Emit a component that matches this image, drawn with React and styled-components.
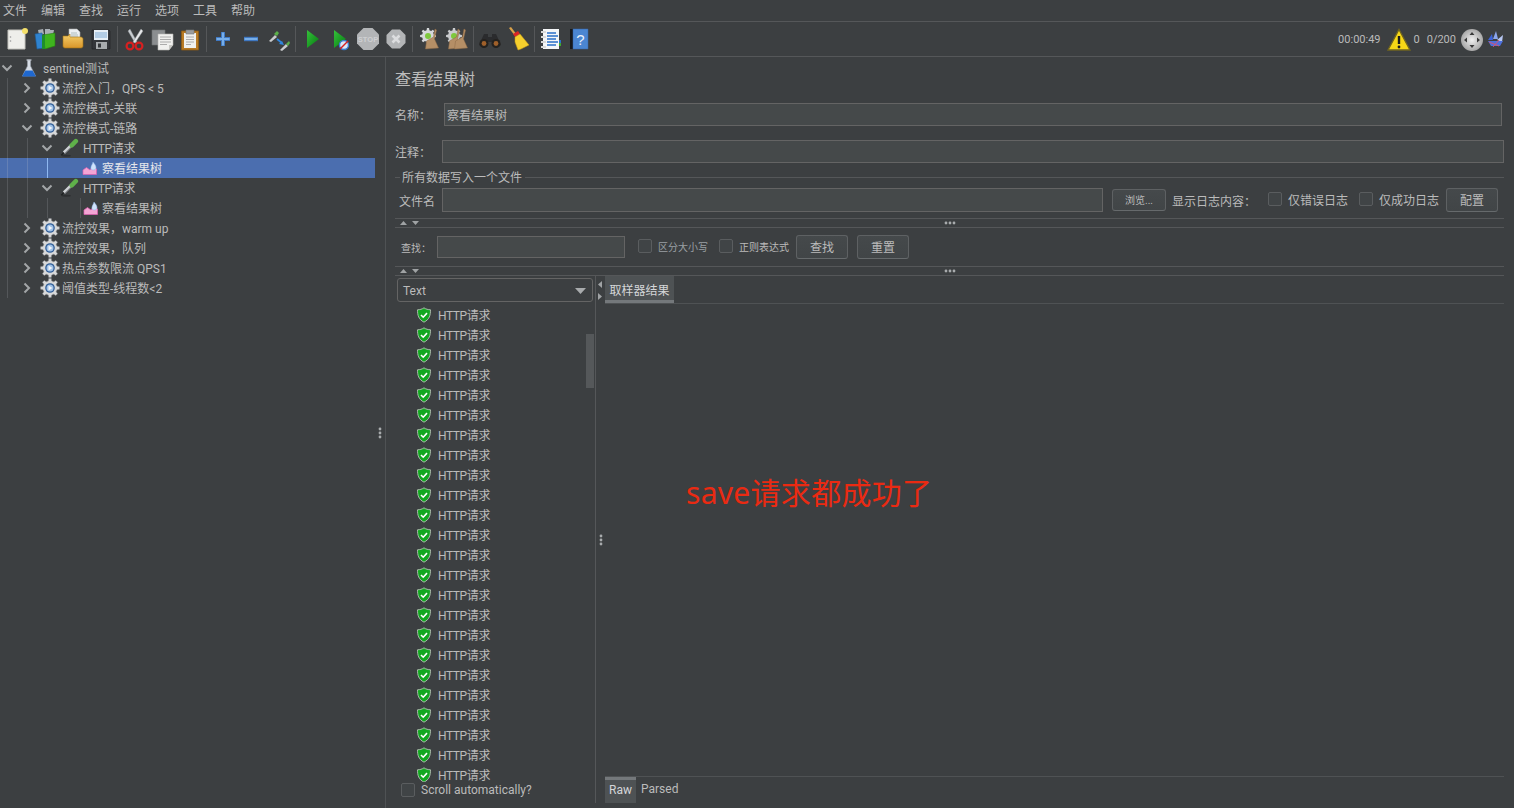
import React from "react";
import styled, { createGlobalStyle } from "styled-components";

const Global = createGlobalStyle`
  html, body { margin: 0; padding: 0; background: #3c3f41; }
  body { font: 12px Roboto, "Noto Sans CJK SC", sans-serif; color: #bbbbbb; overflow: hidden; }
  * { box-sizing: border-box; }
`;

const Page = styled.div`width: 1514px; height: 808px; display: flex; flex-direction: column; background: #3c3f41; overflow: hidden;`;
const MenuBar = styled.div`height: 22px; flex: none; display: flex; gap: 14px; padding: 1px 0 0 3px; align-items: center; border-bottom: 1px solid #555759; line-height: 20px;`;
const MenuItem = styled.span`width: 24px; white-space: nowrap;`;
const ToolBar = styled.div`height: 35px; flex: none; display: flex; align-items: center; padding: 0 9px 1px 3px; border-bottom: 1px solid #555759;`;
const ToolButton = styled.div`width: 28px; height: 28px; flex: none; display: flex; align-items: center; justify-content: center;`;
const ToolSep = styled.div`width: 5px; height: 26px; flex: none; display: flex; justify-content: center; &::before { content: ""; width: 1px; background: #555759; }`;
const Status = styled.div`margin-left: auto; display: flex; align-items: center; font-size: 11px; line-height: 16px; padding-top: 2px;`;
const StatusItem = styled.span`margin-left: ${p => p.$gap || 0}px; display: flex; align-items: center;`;
const Main = styled.div`flex: 1; display: flex; min-height: 0;`;

const Tree = styled.div`width: 375px; flex: none; padding-top: 1px;`;
const Row = styled.div`height: 20px; display: flex; align-items: center; padding-left: 7px; white-space: nowrap; background: ${p => p.$selected ? "#4b6eaf" : "transparent"}; color: ${p => p.$selected ? "#e4e6eb" : "#bbbbbb"};`;
const Guide = styled.span`width: 20px; height: 100%; flex: none; border-left: 1px solid ${p => p.$bright ? "#8fb8f0" : p.$selected ? "#6480b5" : "#54575a"};`;
const Chevron = styled.span`width: 14px; height: 14px; flex: none; margin-left: -7px; display: flex; align-items: center; justify-content: center;`;
const IconSlot = styled.span`width: 20px; height: 100%; flex: none; margin-left: ${p => p.$left}px; margin-right: ${p => p.$right}px; display: flex; align-items: center; justify-content: center; border-left: ${p => p.$tick ? "1px solid #54575a" : "none"};`;
const RowLabel = styled.span`margin-top: -2px; letter-spacing: ${p => p.$tight ? "-0.4px" : "0"};`;
const Splitter = styled.div`width: 10px; flex: none; display: flex; align-items: center; justify-content: center;`;

const Right = styled.div`flex: 1; min-width: 0; border-left: 1px solid #4f5254; padding: 0 10px 5px 9px; display: flex; flex-direction: column;`;
const Title = styled.div`height: 44px; flex: none; font-size: 16px; line-height: 46px;`;
const FieldRow = styled.div`height: ${p => p.$h || 23}px; flex: none; margin-top: ${p => p.$top}px; display: flex; align-items: center;`;
const Label = styled.span`flex: none; width: ${p => p.$w}px; margin-left: ${p => p.$left || 0}px; padding-top: ${p => p.$down || 0}px; white-space: nowrap; font-size: ${p => p.$size || 12}px;`;
const Field = styled.input`
  height: ${p => p.$h || 23}px; width: ${p => p.$w ? p.$w + "px" : "auto"}; flex: ${p => p.$w ? "none" : 1}; min-width: 0;
  margin-right: ${p => p.$right || 0}px; background: #45494a; border: 1px solid #646464; color: #bbbbbb; padding: 0 2px; font: inherit; outline: none;
`;
const Legend = styled.div`height: 18px; flex: none; margin-top: 5px; display: flex; align-items: center; gap: 2px; &::before { content: ""; width: 5px; height: 1px; background: #555759; } &::after { content: ""; flex: 1; height: 1px; background: #555759; }`;
const LegendText = styled.span`padding-right: 1px; margin-top: -2px;`;
const Btn = styled.button`
  width: ${p => p.$w}px; height: ${p => p.$h || 24}px; flex: none; padding: 1px 0 0; margin: 0 0 0 ${p => p.$left || 0}px;
  background: linear-gradient(#45494b, #414547); border: 1px solid #5e6163; border-bottom-color: #666a6c; border-radius: 3px;
  color: #bbbbbb; font: inherit; font-size: ${p => p.$size || 12}px; line-height: 1;
`;
const Check = styled.span`width: 14px; height: 14px; flex: none; margin-left: ${p => p.$left || 0}px; margin-right: 6px; margin-top: -2px; border: 1px solid #5a5d5f; border-radius: 2px; background: #404446;`;
const CheckLabel = styled.span`flex: none; white-space: nowrap; margin-top: -2px; font-size: ${p => p.$size || 12}px; color: ${p => p.$dim ? "#9aa0a4" : "#bbbbbb"};`;

const Divider = styled.div`height: 10px; flex: none; border-top: 1px solid #555759; border-bottom: 1px solid #555759; margin-top: ${p => p.$top || 0}px; display: grid; grid-template-columns: 1fr auto 1fr; align-items: center;`;
const Arrows = styled.div`display: flex; gap: 5px; padding-left: 5px; align-items: center;`;

const Bottom = styled.div`flex: 1; min-height: 0; display: flex;`;
const Results = styled.div`width: 201px; flex: none; display: flex; flex-direction: column; border-right: 1px solid #555759; position: relative;`;
const Combo = styled.div`height: 24px; width: 196px; flex: none; margin: 2px 0 2px 2px; padding: 1px 6px 0 5px; border: 1px solid #646464; border-radius: 3px; display: flex; align-items: center; justify-content: space-between; background: #3c3f41;`;
const ResultList = styled.div`flex: 1; min-height: 0; overflow: hidden; padding-top: 1px;`;
const ResultRow = styled.div`height: 20px; display: flex; align-items: center; padding-left: 21px; white-space: nowrap; gap: 6px;`;
const ScrollThumb = styled.div`position: absolute; left: 191px; top: 58px; width: 8px; height: 54px; background: #55585a;`;
const AutoScroll = styled.div`height: 21px; flex: none; display: flex; align-items: center; padding: 0 0 4px 6px;`;
const SideSplit = styled.div`width: 9px; flex: none; display: flex; flex-direction: column; align-items: center; position: relative; justify-content: center;`;
const SideArrows = styled.div`position: absolute; top: 5px; left: 2px; display: flex; flex-direction: column; gap: 5px;`;
const Viewer = styled.div`flex: 1; min-width: 0; display: flex; flex-direction: column; position: relative;`;
const TabBar = styled.div`height: 28px; flex: none; border-bottom: 1px solid #4f5254; display: flex;`;
const Tab = styled.div`width: 69px; height: 27px; background: #4e5254; border-bottom: 3px solid #74787b; color: #d4d6d8; display: flex; align-items: center; justify-content: center; padding-top: 2px;`;
const ViewBody = styled.div`flex: 1;`;
const RawBar = styled.div`height: 27px; flex: none; border-top: 1px solid #4f5254; display: flex; align-items: center;`;
const RawTab = styled.div`width: 31px; height: 100%; background: #4e5254; border-top: 3px solid #74787b; color: #d4d6d8; display: flex; align-items: center; justify-content: center; padding-bottom: 3px;`;
const Parsed = styled.span`margin-left: 5px; padding-bottom: 2px;`;
const Note = styled.div`position: absolute; left: 81px; top: 195px; font: 30px/44px "Noto Sans", "Noto Sans CJK SC", sans-serif; letter-spacing: 0.3px; color: #ea2a12; white-space: nowrap;`;
const Defs = styled.svg`position: absolute; width: 0; height: 0;`;

const gearPath = (cx, cy, ro, ri, n) => {
  let d = "";
  const step = (Math.PI * 2) / n;
  for (let i = 0; i < n; i++) {
    const a = i * step - Math.PI / 2;
    const pts = [[a - step * 0.3, ri], [a - step * 0.17, ro], [a + step * 0.17, ro], [a + step * 0.3, ri]];
    pts.forEach(([t, r], j) => {
      d += `${i === 0 && j === 0 ? "M" : "L"}${(cx + r * Math.cos(t)).toFixed(2)} ${(cy + r * Math.sin(t)).toFixed(2)}`;
    });
  }
  return d + "Z";
};

const I = ({ w = 24, h = 24, children }) => <svg width={w} height={h} viewBox={`0 0 ${w} ${h}`}>{children}</svg>;

const Doc = () => <I><path d="M3 3h17v19H3z" fill="#eeeeea" stroke="#c4c4be" /><circle cx="20" cy="4" r="3" fill="#f4e06a" /><circle cx="5.5" cy="10" r=".8" fill="#999" /><circle cx="5.5" cy="14" r=".8" fill="#999" /></I>;
const Templates = () => <I><path d="M5 3l5-1 1 5-5 1zM12 2h5l1 6h-6zM17 3h4l-1 5h-3z" fill="#a9b0b6" /><path d="M2 7l7-1 2 15-7 1z" fill="#2f83cf" stroke="#1d5c98" strokeWidth=".6" /><path d="M10 8l12-2v13l-10 3z" fill="#3fb41f" stroke="#258010" strokeWidth=".6" /><path d="M9 8h3v14H9z" fill="#1f8f2b" /></I>;
const Open = () => <I><path d="M8 2h8l3 3v9H8z" fill="#eceff2" stroke="#aaa" strokeWidth=".6" /><path d="M10 6h6M10 8h7M10 10h7" stroke="#9aa" strokeWidth=".7" /><path d="M2 9h5l2-2 0 3h11c1 0 2 1 2 2v7c0 1-1 2-2 2H4c-1 0-2-1-2-2z" fill="url(#folder)" stroke="#a37414" strokeWidth=".6" /></I>;
const Save = () => <I><path d="M3 3h17l1 1v18H3z" fill="#34363a" stroke="#1e1f22" strokeWidth=".6" /><path d="M5 3h14v10H5z" fill="#e6eef6" /><path d="M6 6h12M6 8h12M6 10h12" stroke="#7fa9d3" strokeWidth="1" /><path d="M7 15h11v7H7z" fill="#a8abae" /><path d="M9 16.5h3v4H9z" fill="#34363a" /></I>;
const Cut = () => <I><path d="M8 2l7 13-2 1L6 4z" fill="#c9ced2" stroke="#8a8f93" strokeWidth=".4" /><path d="M19 2l-8 13 2 1 8-12z" fill="#e6e8ea" stroke="#8a8f93" strokeWidth=".4" /><circle cx="8" cy="19" r="3.4" fill="none" stroke="#d62020" strokeWidth="2.2" /><circle cx="17" cy="19" r="3.4" fill="none" stroke="#d62020" strokeWidth="2.2" /></I>;
const Copy = () => <I><path d="M2 3h13v15H2z" fill="#8b8e90" stroke="#6f7274" strokeWidth=".6" /><path d="M8 7h15v11l-4 5H8z" fill="#f0f0ee" stroke="#b5b5b2" strokeWidth=".6" /><path d="M19 23v-5h4z" fill="#c6c6c2" /><path d="M10 10h11M10 12.5h11M10 15h11M10 17.5h7" stroke="#999" strokeWidth=".8" /></I>;
const Paste = () => <I><path d="M3.5 4h17v19h-17z" fill="#b87a24" stroke="#8c5a14" strokeWidth=".8" /><path d="M6 6h12v15H6z" fill="#f0f0ee" /><path d="M8 3h8v4H8z" fill="#9a9c9e" stroke="#77797b" strokeWidth=".6" /><path d="M8 10h8M8 12.5h8M8 15h8M8 17.5h5" stroke="#999" strokeWidth=".8" /></I>;
const Plus = () => <I><path d="M12 5v14M5 12h14" stroke="#3f78c2" strokeWidth="4" /><path d="M12 5.5v13M5.5 12h13" stroke="#77aee8" strokeWidth="2" /></I>;
const Minus = () => <I><path d="M5 12h14" stroke="#3f78c2" strokeWidth="4.4" /><path d="M5.5 12h13" stroke="#77aee8" strokeWidth="2" /></I>;
const Toggle = () => <I><path d="M2 14l6-6 2 2-6 5z" fill="#c9cbcd" /><path d="M7 7l3-3 2 2-2 3z" fill="#5bb04a" /><path d="M10 12l5 4" stroke="#2f86de" strokeWidth="1.8" /><path d="M17 18l-5-1 3-3z" fill="#2f86de" /><path d="M13 23l6-6 2 2-6 5z" fill="#c9cbcd" /><path d="M19 17l3-3 1 2-2 3z" fill="#5bb04a" /></I>;
const Play = () => <I><path d="M7 3v18l12-9z" fill="url(#play)" /></I>;
const PlayNo = () => <I><path d="M6 3v18l12-9z" fill="url(#play)" /><circle cx="16" cy="18" r="4.5" fill="#d9e6f6" stroke="#3a7cd0" strokeWidth="1.4" /><path d="M12 22l8-8" stroke="#d62020" strokeWidth="1.4" /></I>;
const Stop = () => <I><path d="M7.5 1h9L23 7.5v9L16.5 23h-9L1 16.5v-9z" fill="#b3b5b7" /><text x="12" y="15" textAnchor="middle" fontSize="7.5" fontWeight="700" fill="#cfd0d2" fontFamily="Liberation Sans, sans-serif">STOP</text></I>;
const Shutdown = () => <I><path d="M8 2.5h8L21.5 8v8L16 21.5H8L2.5 16V8z" fill="#b3b5b7" /><path d="M8.5 8.5l7 7M15.5 8.5l-7 7" stroke="#dcdddf" strokeWidth="2.6" /></I>;
const Broomish = ({ x = 0 }) => <path transform={`translate(${x} 0)`} d="M17 2l1.5 1-2 9 4 9-13 1 1-8 7-4z" fill="#b58f66" stroke="#8c6a47" strokeWidth=".5" />;
const Clear = () => <I><path d={gearPath(11, 9, 8, 6, 8)} fill="#d6d8da" /><circle cx="11" cy="9" r="3" fill="#7ec83d" /><Broomish x={1} /></I>;
const ClearAll = () => <I><path d={gearPath(9, 9, 8, 6, 8)} fill="#c9cbcd" /><circle cx="9" cy="9" r="3" fill="#7ec83d" /><Broomish x={-4} /><Broomish x={2} /></I>;
const Binoculars = () => <I><path d="M6 7h4v3h4V7h4l5 11-5 3-4-6h-4l-4 6-5-3z" fill="#2a2b2d" /><circle cx="6" cy="16.5" r="4.5" fill="#24221f" /><circle cx="18" cy="16.5" r="4.5" fill="#24221f" /><circle cx="6" cy="16.5" r="2.4" fill="#a0602a" /><circle cx="18" cy="16.5" r="2.4" fill="#a0602a" /></I>;
const Broom = () => <I><path d="M3 1l2-1 6 8-2 1z" fill="#d9a24a" /><path d="M7 7l5-3 2 3-5 3z" fill="#d92525" /><path d="M9 10l5-3 9 11-8 4-3 1-3-8z" fill="#f5cf2d" stroke="#c99a14" strokeWidth=".5" /></I>;
const FuncList = () => <I><path d="M4 2h16v20H4z" fill="#f4f6f8" /><path d="M8 6h9M8 9h11M8 12h9M8 15h11M8 18h9" stroke="#2a70c8" strokeWidth="1.3" /><path d="M2 5h5M2 10h5M2 15h5M2 20h5" stroke="#d8d8d8" strokeWidth="2" /><path d="M20 13h2v3h-2z" fill="#2a70c8" /><path d="M20 16h2v3h-2z" fill="#3fa82f" /></I>;
const Help = () => <I><path d="M3 2h3v20H3z" fill="#17191b" /><path d="M6 2h15v20H6z" fill="#4b86d2" stroke="#3767a8" strokeWidth=".5" /><text x="13.5" y="18" textAnchor="middle" fontSize="15" fill="#eaf2fb" fontFamily="Liberation Sans, sans-serif">?</text></I>;
const Warn = () => <I><path d="M12 1.5L23 22H1z" fill="#f7d716" stroke="#6f6420" strokeWidth="1.4" /><path d="M12 8v8" stroke="#1c1c1c" strokeWidth="2.4" /><circle cx="12" cy="19" r="1.4" fill="#1c1c1c" /></I>;
const Remote = () => <I><circle cx="12" cy="12" r="11" fill="url(#knob)" /><g fill="#3a3a3a"><path d="M12 4l2.5 3h-5zM12 20l2.5-3h-5zM4 12l3-2.5v5zM20 12l-3-2.5v5z" /></g></I>;
const Logger = () => <I w={20} h={20}><path d="M3 10l4-6 1 6z" fill="#3d63d8" /><path d="M8 9l3-8 2 8z" fill="#8aa6ee" /><path d="M12 10l6-5-1 7z" fill="#b8c8f4" /><path d="M3 11h15l-3 5H6z" fill="#4d70dc" /><path d="M4 12l10 4M14 10l-6 7" stroke="#e0506a" strokeWidth=".9" /></I>;

const Flask = () => <I w={18} h={20}><path d="M7.5 2h3v6l5 10h-13l5-10z" fill="#d7dde6" stroke="#9aa3ad" strokeWidth=".6" /><path d="M5.5 12.5h7l3.5 6H2z" fill="#1f68cf" /><path d="M6.5 2h5" stroke="#c4cad2" strokeWidth="1.2" /></I>;
const Gear = () => <I w={20} h={20}><path d={gearPath(10, 10, 9.5, 7.2, 8)} fill="#d8d9da" stroke="#8b8d90" strokeWidth=".5" /><circle cx="10" cy="10" r="4.8" fill="#2f5c96" /><circle cx="10" cy="10" r="3.5" fill="#9fc0e6" /><path d="M8.5 7.5v5l4-2.5z" fill="#f2f6fb" /></I>;
const Dropper = () => <I w={22} h={20}><ellipse cx="8" cy="18.5" rx="5" ry="1" fill="#2d2f31" /><path d="M2.5 18L6 14.5" stroke="#1f2022" strokeWidth="1.6" /><path d="M5.5 15L13.5 7" stroke="#cfd2d5" strokeWidth="3.4" /><path d="M6 16L14 8" stroke="#7d8084" strokeWidth="1" /><path d="M14 7L18.5 2.5" stroke="#5fb04a" strokeWidth="5" strokeLinecap="round" /></I>;
const Listener = () => <I w={16} h={16}><path d="M1 14.5V10l3.5-2.5L8 10l3-4 3.5 3v5.5z" fill="#f3a4d4" stroke="#e35fb2" strokeWidth=".7" /><path d="M11 2c1.5 2 3 3.5 3 5.5s-1.5 2.5-3 2.5-2.5-1-2-3c.3-1.5 1.5-3 2-5z" fill="#cfe2fb" stroke="#8fb4e6" strokeWidth=".5" /></I>;
const Shield = () => <I w={16} h={16}><path d="M8 .8c2 1.5 4 1.8 6.5 2 0 5.5-1 9.5-6.5 12.4C2.5 12.3 1.5 8.3 1.5 2.8 4 2.6 6 2.3 8 .8z" fill="#12a820" stroke="#b8c0b8" strokeWidth=".9" /><path d="M5 8l2.2 2.2 3.8-4.1" stroke="#fff" strokeWidth="1.6" fill="none" /></I>;

const ChevOpen = () => <svg width="12" height="8" viewBox="0 0 12 8"><path d="M1.5 1.5L6 6l4.5-4.5" stroke="#a3a6a8" strokeWidth="2" fill="none" /></svg>;
const ChevClosed = () => <svg width="8" height="12" viewBox="0 0 8 12"><path d="M1.5 1.5L6 6l-4.5 4.5" stroke="#a3a6a8" strokeWidth="2" fill="none" /></svg>;
const TriUp = () => <svg width="7" height="4" viewBox="0 0 7 4"><path d="M3.5 0L7 4H0z" fill="#a0a3a5" /></svg>;
const TriDown = () => <svg width="7" height="4" viewBox="0 0 7 4"><path d="M3.5 4L7 0H0z" fill="#a0a3a5" /></svg>;
const TriLeft = () => <svg width="4" height="7" viewBox="0 0 4 7"><path d="M0 3.5L4 0v7z" fill="#a0a3a5" /></svg>;
const TriRight = () => <svg width="4" height="7" viewBox="0 0 4 7"><path d="M4 3.5L0 0v7z" fill="#a0a3a5" /></svg>;
const DotsH = () => <svg width="12" height="4" viewBox="0 0 12 4"><g fill="#a8abad"><circle cx="2" cy="2" r="1.4" /><circle cx="6" cy="2" r="1.4" /><circle cx="10" cy="2" r="1.4" /></g></svg>;
const DotsV = () => <svg width="4" height="12" viewBox="0 0 4 12"><g fill="#a8abad"><circle cx="2" cy="2" r="1.4" /><circle cx="2" cy="6" r="1.4" /><circle cx="2" cy="10" r="1.4" /></g></svg>;
const Caret = () => <svg width="11" height="6" viewBox="0 0 11 6"><path d="M0 0h11L5.5 6z" fill="#a8abad" /></svg>;

const tools = [[Doc, Templates, Open, Save], [Cut, Copy, Paste], [Plus, Minus, Toggle], [Play, PlayNo, Stop, Shutdown], [Clear, ClearAll], [Binoculars, Broom], [FuncList, Help]];
const menus = ["文件", "编辑", "查找", "运行", "选项", "工具", "帮助"];
const kinds = {
  flask: { Icon: Flask, left: 5, right: 4 },
  gear: { Icon: Gear, left: 6, right: 2 },
  dropper: { Icon: Dropper, left: 5, right: 4 },
  listener: { Icon: Listener, left: 13, right: 2 },
};
const rows = [
  { depth: 0, kind: "flask", label: "sentinel测试", open: true },
  { depth: 1, kind: "gear", label: "流控入门，QPS < 5" },
  { depth: 1, kind: "gear", label: "流控模式-关联" },
  { depth: 1, kind: "gear", label: "流控模式-链路", open: true },
  { depth: 2, kind: "dropper", label: "HTTP请求", open: true },
  { depth: 3, kind: "listener", label: "察看结果树", selected: true },
  { depth: 2, kind: "dropper", label: "HTTP请求", open: true },
  { depth: 3, kind: "listener", label: "察看结果树", tick: true },
  { depth: 1, kind: "gear", label: "流控效果，warm up" },
  { depth: 1, kind: "gear", label: "流控效果，队列" },
  { depth: 1, kind: "gear", label: "热点参数限流 QPS1" },
  { depth: 1, kind: "gear", label: "阈值类型-线程数<2" },
];

const TreeRow = ({ depth, kind, label, open, selected, tick }) => {
  const { Icon, left, right } = kinds[kind];
  const isLeaf = kind === "listener";
  return (
    <Row $selected={selected}>
      {Array.from({ length: depth }, (_, i) => <Guide key={i} $selected={selected} $bright={selected && i === 2} />)}
      {!isLeaf && <Chevron>{open ? <ChevOpen /> : <ChevClosed />}</Chevron>}
      <IconSlot $left={left} $right={right} $tick={tick}><Icon /></IconSlot>
      <RowLabel $tight={kind === "dropper"}>{label}</RowLabel>
    </Row>
  );
};

const SplitDivider = ({ top }) => (
  <Divider $top={top}>
    <Arrows><TriUp /><TriDown /></Arrows>
    <DotsH />
    <span />
  </Divider>
);

export default function App() {
  return (
    <Page>
      <Global />
      <Defs aria-hidden="true">
        <defs>
          <linearGradient id="folder" x1="0" y1="0" x2="0" y2="1"><stop offset="0" stopColor="#f6cf6a" /><stop offset="1" stopColor="#d9962a" /></linearGradient>
          <linearGradient id="play" x1="0" y1="0" x2="1" y2="1"><stop offset="0" stopColor="#35c23a" /><stop offset="1" stopColor="#067a12" /></linearGradient>
          <radialGradient id="knob"><stop offset="0" stopColor="#f0f0f0" /><stop offset="1" stopColor="#a8a8a8" /></radialGradient>
        </defs>
      </Defs>
      <MenuBar>{menus.map(m => <MenuItem key={m}>{m}</MenuItem>)}</MenuBar>
      <ToolBar>
        {tools.map((group, g) => (
          <React.Fragment key={g}>
            {g > 0 && <ToolSep />}
            {group.map((T, i) => <ToolButton key={i}><T /></ToolButton>)}
          </React.Fragment>
        ))}
        <Status>
          <span>00:00:49</span>
          <StatusItem $gap={6}><Warn /></StatusItem>
          <StatusItem $gap={3}>0</StatusItem>
          <StatusItem $gap={7}>0/200</StatusItem>
          <StatusItem $gap={4}><Remote /></StatusItem>
          <StatusItem $gap={1}><Logger /></StatusItem>
        </Status>
      </ToolBar>
      <Main>
        <Tree>{rows.map((r, i) => <TreeRow key={i} {...r} />)}</Tree>
        <Splitter><DotsV /></Splitter>
        <Right>
          <Title>查看结果树</Title>
          <FieldRow $top={2}>
            <Label $w={49}>名称：</Label>
            <Field defaultValue="察看结果树" $right={2} />
          </FieldRow>
          <FieldRow $top={14}>
            <Label $w={47}>注释：</Label>
            <Field />
          </FieldRow>
          <Legend><LegendText>所有数据写入一个文件</LegendText></Legend>
          <FieldRow $top={2} $h={24}>
            <Label $w={43} $left={4} $down={1}>文件名</Label>
            <Field $w={661} $h={24} />
            <Btn $w={54} $h={22} $left={9} $size={10}>浏览...</Btn>
            <Label $w={96} $left={6} $down={1}>显示日志内容：</Label>
            <Check />
            <CheckLabel>仅错误日志</CheckLabel>
            <Check $left={11} />
            <CheckLabel>仅成功日志</CheckLabel>
            <Btn $w={52} $left={7}>配置</Btn>
          </FieldRow>
          <SplitDivider top={6} />
          <FieldRow $top={0} $h={38}>
            <Label $w={36} $left={6} $size={10}>查找：</Label>
            <Field $w={188} $h={22} />
            <Check $left={13} />
            <CheckLabel $size={10} $dim>区分大小写</CheckLabel>
            <Check $left={11} />
            <CheckLabel $size={10}>正则表达式</CheckLabel>
            <Btn $w={52} $left={7}>查找</Btn>
            <Btn $w={52} $left={9}>重置</Btn>
          </FieldRow>
          <SplitDivider />
          <Bottom>
            <Results>
              <Combo>Text<Caret /></Combo>
              <ResultList>
                {Array.from({ length: 24 }, (_, i) => (
                  <ResultRow key={i}><Shield /><RowLabel $tight>HTTP请求</RowLabel></ResultRow>
                ))}
              </ResultList>
              <ScrollThumb />
              <AutoScroll><Check /><CheckLabel>Scroll automatically?</CheckLabel></AutoScroll>
            </Results>
            <SideSplit>
              <SideArrows><TriLeft /><TriRight /></SideArrows>
              <DotsV />
            </SideSplit>
            <Viewer>
              <TabBar><Tab>取样器结果</Tab></TabBar>
              <ViewBody />
              <RawBar><RawTab>Raw</RawTab><Parsed>Parsed</Parsed></RawBar>
              <Note>save请求都成功了</Note>
            </Viewer>
          </Bottom>
        </Right>
      </Main>
    </Page>
  );
}
